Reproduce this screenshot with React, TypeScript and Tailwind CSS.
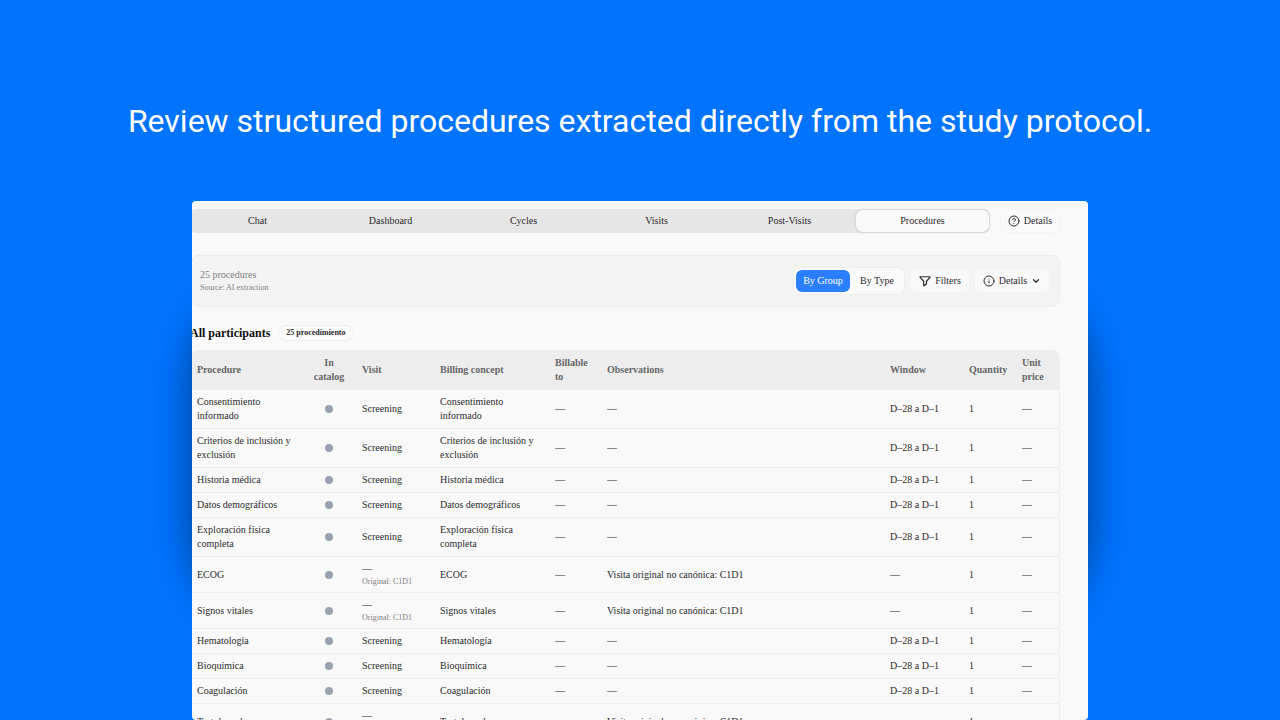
import { ChevronDown, CircleQuestionMark, Info } from "lucide-react";
import type { ReactNode } from "react";

const tabs = ["Chat", "Dashboard", "Cycles", "Visits", "Post-Visits", "Procedures"];

type Row = { name: string; canonical: boolean };

const rows: Row[] = [
	{ name: "Consentimiento informado", canonical: true },
	{ name: "Criterios de inclusión y exclusión", canonical: true },
	{ name: "Historia médica", canonical: true },
	{ name: "Datos demográficos", canonical: true },
	{ name: "Exploración física completa", canonical: true },
	{ name: "ECOG", canonical: false },
	{ name: "Signos vitales", canonical: false },
	{ name: "Hematología", canonical: true },
	{ name: "Bioquímica", canonical: true },
	{ name: "Coagulación", canonical: true },
	{ name: "Test de embarazo", canonical: false },
];

function FilterIcon() {
	return (
		<svg viewBox="0 0 24 24" className="h-3 w-3" fill="none" stroke="currentColor" strokeWidth="2.4" strokeLinejoin="round" strokeLinecap="round" aria-hidden="true">
			<path d="M2.5 3.5h19c.6 0 .8.7.4 1.1L15 12.5V18l-5.500 3.500v-9L2.100 4.600c-.4-.4-.2-1.100.4-1.100z" />
		</svg>
	);
}

function Th({ children, center }: { children: ReactNode; center?: boolean }) {
	return <th className={center ? "px-[6px] py-[5px] text-center font-bold" : "px-[6px] py-[5px] text-left font-bold"}>{children}</th>;
}

function Td({ children }: { children: ReactNode }) {
	return <td className="px-[6px] py-[5px]">{children}</td>;
}

export default function App() {
	return (
		<div className="flex h-screen flex-col overflow-hidden bg-[#0073ff]">
			<h1 className="pt-[96px] text-center font-['Roboto',sans-serif] text-[32px] leading-[50px] whitespace-nowrap text-white">
				Review structured procedures extracted directly from the study protocol.
			</h1>

			<main className="mt-[55px] flex min-h-0 flex-1 flex-col px-[15%]">
				<div className="relative flex min-h-0 flex-1 flex-col">
					{/* Soft shadow behind the card */}
					<div className="absolute inset-x-0 top-[15%] bottom-[17%] rounded-[100px] bg-black/45 blur-[20px]" />
					<div className="relative min-h-0 flex-1 overflow-hidden rounded-[4px] bg-[#f9f9f9] pr-7 font-['Liberation_Serif',serif] text-[10px] leading-[14px] text-[#2b2b2b]">
						<div className="-ml-px">
							{/* Tabs */}
							<div className="-ml-px flex items-center gap-[10px] pt-2">
								<nav className="flex h-6 flex-1 rounded-[6px] bg-[#e6e6e6] p-px">
									{tabs.map((tab) => (
										<button
											key={tab}
											type="button"
											className={tab === "Procedures" ? "flex-1 rounded-[7px] bg-[#f9f9f9] shadow-[0_0_2px_1px_rgba(0,0,0,0.08)]" : "flex-1"}
										>
											{tab}
										</button>
									))}
								</nav>
								<button type="button" className="flex h-6 w-[60px] items-center justify-center gap-1 rounded-[6px] border border-[#f4f4f4] bg-[#fafafa]">
									<CircleQuestionMark className="h-3 w-3" />
									Details
								</button>
							</div>

							{/* Toolbar */}
							<section className="mt-[22px] flex h-[52px] items-center justify-between rounded-[8px] border border-[#ececec] bg-[#f3f3f3] pr-[10px] pl-2">
								<div className="text-[#808080]">
									<p>25 procedures</p>
									<p className="text-[8px] leading-3">Source: AI extraction</p>
								</div>
								<div className="flex items-center gap-[6px]">
									<div className="flex h-7 items-center gap-[2px] rounded-[7px] border border-[#eeeeee] bg-[#fafafa] p-[2px]">
										<button type="button" className="h-[22px] w-[54px] rounded-[6px] bg-[#2b7fff] text-white">
											By Group
										</button>
										<button type="button" className="h-[22px] w-[50px]">
											By Type
										</button>
									</div>
									<button type="button" className="flex h-[22px] w-[58px] items-center justify-center gap-1 rounded-[5px] bg-[#f9f9f9]">
										<FilterIcon />
										Filters
									</button>
									<button type="button" className="flex h-[22px] w-[74px] items-center justify-center gap-1 rounded-[5px] bg-[#f9f9f9]">
										<Info className="h-3 w-3" />
										Details
										<ChevronDown className="h-[10px] w-[10px]" strokeWidth={3} />
									</button>
								</div>
							</section>

							{/* Group heading */}
							<div className="mt-[18px] flex h-4 items-center gap-2">
								<h2 className="-ml-px text-[12px] font-bold text-[#111111]">All participants</h2>
								<span className="rounded-full border border-[#eeeeee] bg-[#fbfbfb] px-[7px] text-[8px] font-bold">25 procedimiento</span>
							</div>

							{/* Procedures */}
							<div className="mt-[9px] overflow-hidden rounded-t-[8px] border border-b-0 border-l-0 border-[#eeeeee]">
								<table className="w-full table-fixed border-collapse">
									<colgroup>
										<col className="w-[111px]" />
										<col className="w-[54px]" />
										<col className="w-[78px]" />
										<col className="w-[115px]" />
										<col className="w-[52px]" />
										<col />
										<col className="w-[79px]" />
										<col className="w-[53px]" />
										<col className="w-[43px]" />
									</colgroup>
									<thead className="bg-[#ededed] text-[#666666]">
										<tr className="border-b border-[#eeeeee]">
											<Th>Procedure</Th>
											<Th center>
												In
												<br />
												catalog
											</Th>
											<Th>Visit</Th>
											<Th>Billing concept</Th>
											<Th>
												Billable
												<br />
												to
											</Th>
											<Th>Observations</Th>
											<Th>Window</Th>
											<Th>Quantity</Th>
											<Th>
												Unit
												<br />
												price
											</Th>
										</tr>
									</thead>
									<tbody>
										{rows.map((row) => (
											<tr key={row.name} className="border-b border-[#eeeeee]">
												<Td>{row.name}</Td>
												<Td>
													<span className="mx-auto block h-2 w-2 rounded-full bg-[#99a1af]" />
												</Td>
												<Td>
													{row.canonical ? (
														"Screening"
													) : (
														<>
															—
															<span className="block text-[8px] leading-[11px] text-[#808080]">Original: C1D1</span>
														</>
													)}
												</Td>
												<Td>{row.name}</Td>
												<Td>—</Td>
												<Td>{row.canonical ? "—" : "Visita original no canónica: C1D1"}</Td>
												<Td>{row.canonical ? "D–28 a D–1" : "—"}</Td>
												<Td>1</Td>
												<Td>—</Td>
											</tr>
										))}
									</tbody>
								</table>
							</div>
						</div>
					</div>
				</div>
			</main>
		</div>
	);
}
